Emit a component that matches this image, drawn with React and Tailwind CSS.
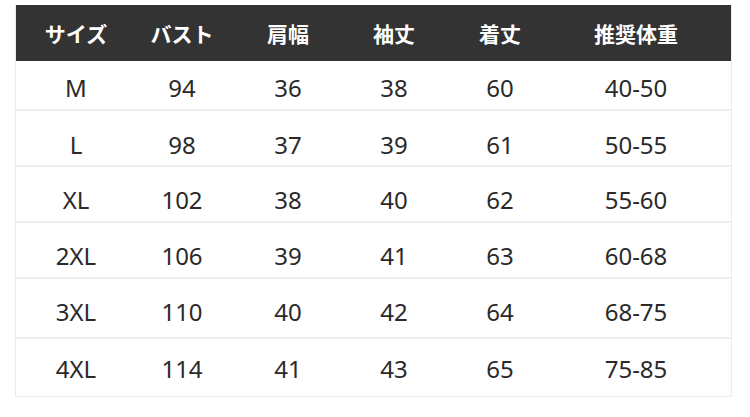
import React from 'react';

const headers = ['サイズ', 'バスト', '肩幅', '袖丈', '着丈', '推奨体重'];

const rows = [
  { cells: ['M', '94', '36', '38', '60', '40-50'], cls: 'h-[50px] pt-[6px]' },
  { cells: ['L', '98', '37', '39', '61', '50-55'], cls: 'h-[56px] pt-[14px]' },
  { cells: ['XL', '102', '38', '40', '62', '55-60'], cls: 'h-[56px] pt-[12px]' },
  { cells: ['2XL', '106', '39', '41', '63', '60-68'], cls: 'h-[56px] pt-[12px]' },
  { cells: ['3XL', '110', '40', '42', '64', '68-75'], cls: 'h-[60px] pt-[8px]' },
  { cells: ['4XL', '114', '41', '43', '65', '75-85'], cls: 'h-[57px] pt-[3px]' },
];

const gridCols = 'grid grid-cols-[106px_106px_106px_106px_106px_166px] pl-[7px]';

const App = () => {
  return (
    <div className="w-[750px] h-[417px] bg-white pt-[5px] pl-[15px]">
      <div className="w-[717px] border-x border-b border-[#ececec]">
        {/* Header */}
        <div
          className={`${gridCols} h-[56px] items-center bg-[#333333] text-white text-[21px] font-bold`}
          style={{ fontFamily: '"Noto Sans CJK JP", "Noto Sans", sans-serif' }}
        >
          {headers.map((h) => (
            <div key={h} className="text-center leading-none">
              {h}
            </div>
          ))}
        </div>

        {/* Rows */}
        {rows.map((row, i) => (
          <div
            key={row.cells[0]}
            className={`${gridCols} ${row.cls} items-center text-[24px] text-[#2a2a2a] ${
              i < rows.length - 1 ? 'border-b-2 border-[#ececec]' : ''
            }`}
            style={{ fontFamily: '"Noto Sans", "Open Sans", sans-serif' }}
          >
            {row.cells.map((c, j) => (
              <div key={j} className="text-center leading-none">
                {c}
              </div>
            ))}
          </div>
        ))}
      </div>
    </div>
  );
};

export default App;
